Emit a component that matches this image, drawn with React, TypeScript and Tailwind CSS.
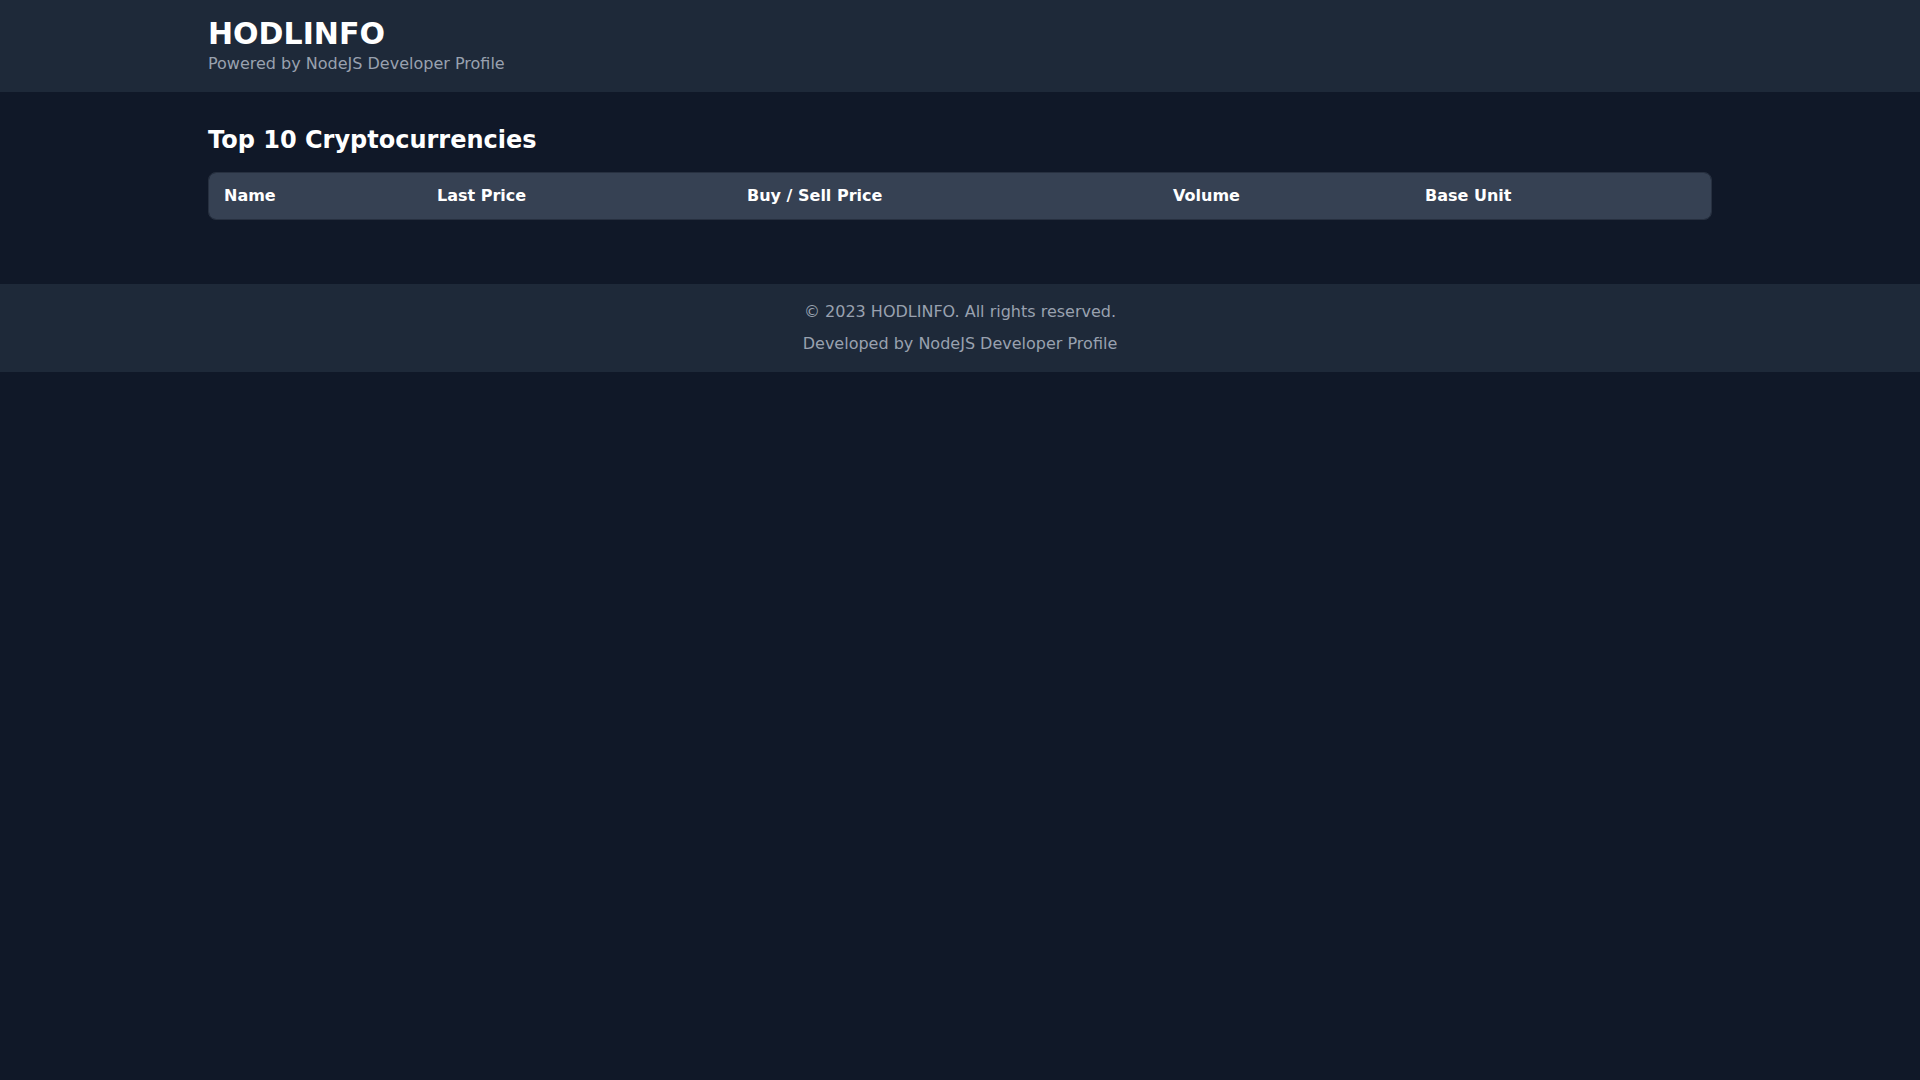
export default function App() {
  const columns = [
    { label: 'Name', width: 'w-[213px]' },
    { label: 'Last Price', width: 'w-[310px]' },
    { label: 'Buy / Sell Price', width: 'w-[426px]' },
    { label: 'Volume', width: 'w-[252px]' },
    { label: 'Base Unit', width: '' },
  ];

  return (
    <div className="min-h-screen bg-gray-900 font-['DejaVu_Sans',sans-serif] text-white">
      <header className="bg-gray-800">
        <div className="container mx-auto px-4 py-4">
          <h1 className="text-3xl font-bold">HODLINFO</h1>
          <p className="text-base text-gray-400">Powered by NodeJS Developer Profile</p>
        </div>
      </header>

      <main className="container mx-auto px-4 py-8">
        <h2 className="mb-4 text-2xl font-bold">Top 10 Cryptocurrencies</h2>
        <div className="mb-8 overflow-hidden rounded-lg border border-gray-600/40">
          <table className="w-full table-fixed border-collapse text-left">
            <thead className="bg-gray-700">
              <tr>
                {columns.map((c) => (
                  <th key={c.label} className={`${c.width} px-[15px] py-[11px] text-base font-bold`}>
                    {c.label}
                  </th>
                ))}
              </tr>
            </thead>
            <tbody></tbody>
          </table>
        </div>
      </main>

      <footer className="bg-gray-800 py-4 text-center text-base text-gray-400">
        <p>© 2023 HODLINFO. All rights reserved.</p>
        <p className="mt-2">Developed by NodeJS Developer Profile</p>
      </footer>
    </div>
  );
}
